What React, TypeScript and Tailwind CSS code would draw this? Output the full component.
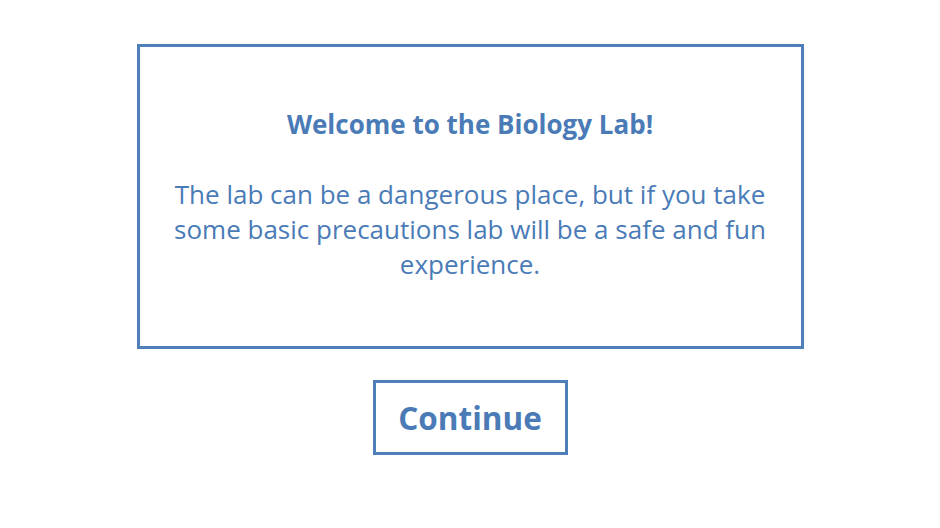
import React from 'react';

export default function App() {
    return (
        <div className="min-h-screen bg-white flex flex-col items-center pt-[44px]" style={{ fontFamily: '"Open Sans", sans-serif' }}>
            <div className="w-[667px] h-[305px] border-[3px] border-[#4f7fb8] flex flex-col items-center justify-center px-8 pb-[3px] text-[#4a7bb7]">
                <h1 className="text-[26px] font-bold leading-[32px]">Welcome to the Biology Lab!</h1>
                <p className="mt-[37px] text-[26px] leading-[35px] text-center">
                    The lab can be a dangerous place, but if you take some basic precautions lab will be a safe and fun experience.
                </p>
            </div>
            <button className="mt-[31px] w-[195px] h-[75px] border-[3px] border-[#4f7fb8] text-[#4a7bb7] text-[31.5px] font-bold">
                Continue
            </button>
        </div>
    );
}
